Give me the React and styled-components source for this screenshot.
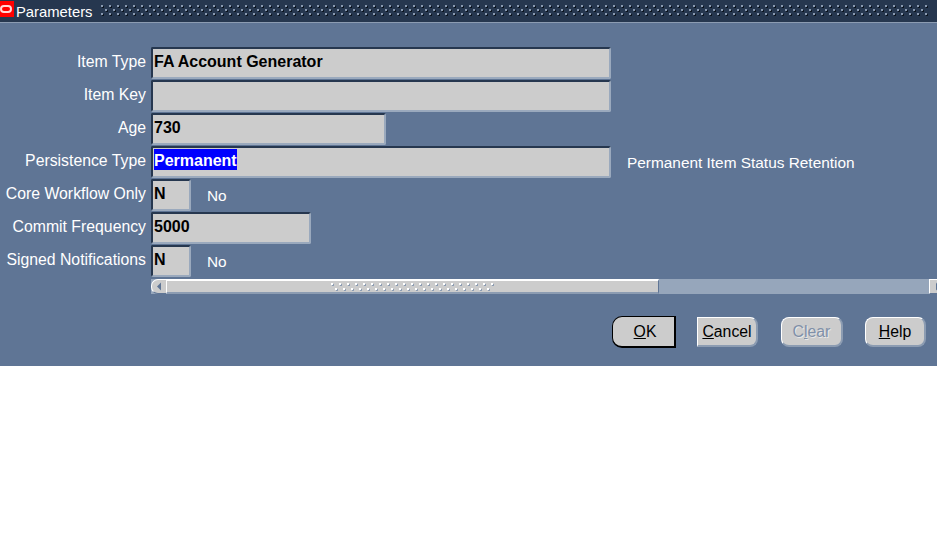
import React from 'react';
import styled, { createGlobalStyle } from 'styled-components';

const GlobalStyle = createGlobalStyle`
  html, body {
    margin: 0;
    padding: 0;
    background: #fff;
  }
`;

const Window = styled.div`
  width: 937px;
  height: 366px;
  background: #5f7595;
  font-family: "Liberation Sans", Arial, sans-serif;
  overflow: hidden;
`;

const TitleBar = styled.div`
  box-sizing: border-box;
  height: 23px;
  background: #26374f;
  border-bottom: 1px solid #8c9cb2;
  display: flex;
  align-items: flex-start;
`;

const LogoBox = styled.div`
  width: 14px;
  height: 16px;
  margin-top: 1px;
  background: #f00;
  flex: none;
`;

const Title = styled.div`
  color: #fff;
  font-size: 14.8px;
  line-height: 16px;
  margin: 4px 0 0 2px;
  flex: none;
`;

const DotStrip = styled.svg`
  display: block;
  flex: none;
  margin: ${p => p.$margin};
`;

const Form = styled.div`
  display: grid;
  grid-template-columns: 146px 1fr;
  grid-auto-rows: 33px;
  column-gap: 5px;
  padding-top: 24px;
`;

const Label = styled.div`
  color: #fff;
  font-size: 15.8px;
  line-height: 30px;
  text-align: right;
  white-space: nowrap;
`;

const FieldRow = styled.div`
  display: flex;
  align-items: flex-start;
`;

const Field = styled.div`
  box-sizing: border-box;
  width: ${p => p.$width}px;
  height: 32px;
  background: #cccccc;
  border: 2px solid;
  border-color: #26374f #9aa9bd #9aa9bd #26374f;
  border-radius: 2px;
  padding-left: 1px;
  color: #000;
  font-size: 16px;
  font-weight: bold;
  line-height: 26px;
  white-space: nowrap;
`;

const Selected = styled.span`
  background: #0000ff;
  color: #fff;
  display: inline-block;
  height: 21px;
  line-height: 24px;
  margin-top: 1px;
  vertical-align: top;
`;

const Hint = styled.div`
  color: #fff;
  font-size: 15.4px;
  line-height: 16px;
  margin: 9px 0 0 16px;
  white-space: nowrap;
`;

const ScrollRow = styled.div`
  grid-column: 2;
  width: 793px;
  height: 15px;
  margin-top: 1px;
  display: flex;
  background: #96a6bb;
`;

const ScrollBtn = styled.div`
  width: 15px;
  height: 15px;
  flex: none;
  box-sizing: border-box;
  background: #cccccc;
  border-top: 1px solid #fff;
  border-bottom: 1px solid #5f7595;
  border-left: 1px solid #fff;
  border-radius: ${p => (p.$left ? '7px 0 0 7px' : '0')};
  display: flex;
  align-items: center;
  justify-content: center;
`;

const Track = styled.div`
  flex: 1;
  display: flex;
`;

const Thumb = styled.div`
  box-sizing: border-box;
  width: 493px;
  height: 15px;
  background: #cccccc;
  border-top: 2px solid #fff;
  border-bottom: 2px solid #8c9cb2;
  border-left: 1px solid #fff;
  border-right: 1px solid #5f7595;
  display: flex;
  justify-content: center;
  align-items: center;
`;

const Buttons = styled.div`
  display: flex;
  justify-content: flex-end;
  padding: 5px 11px 0 0;
  gap: 22px;
`;

const Button = styled.div`
  box-sizing: border-box;
  width: ${p => p.$width}px;
  height: 30px;
  margin-top: 1px;
  margin-right: ${p => p.$after || 0}px;
  background: #cccccc;
  border: 1px solid #fff;
  border-bottom: 2px solid #8c9cb2;
  border-right: 2px solid #8c9cb2;
  border-radius: ${p => (p.$square ? '0 8px 8px 0' : '8px')};
  color: ${p => (p.$disabled ? '#7f90a8' : '#000')};
  font-size: 15.8px;
  line-height: 28px;
  text-align: center;
  text-shadow: ${p => (p.$disabled ? '1px 1px 0 #e8e8e8' : 'none')};
`;

const DefaultButton = styled(Button)`
  height: 32px;
  margin-top: 0;
  border: 1px solid #000;
  border-bottom: 2px solid #000;
  border-right: 2px solid #000;
  border-radius: 10px 0 0 10px;
  line-height: 30px;
  padding-left: 3px;
`;

const Key = styled.span`
  text-decoration: underline;
`;

function Arrow({ left }) {
  return (
    <svg width="7" height="9" viewBox="0 0 7 9">
      <path d={left ? 'M5 0.5 L1 4.5 L5 8.5 Z' : 'M2 0.5 L6 4.5 L2 8.5 Z'} fill="#5f7595" />
    </svg>
  );
}

function OracleLogo() {
  return (
    <svg width="14" height="16" viewBox="0 0 14 16">
      <rect x="1" y="5" width="10" height="6" rx="3" fill="none" stroke="#ffd8d8" strokeWidth="2" />
    </svg>
  );
}

// staggered two-tone dots, used on the title bar and the scrollbar thumb
function Dots({ id, width, height, rowGap, light, dark, margin }) {
  return (
    <DotStrip width={width} height={height} $margin={margin} shapeRendering="crispEdges">
      <defs>
        <pattern id={id} width="8" height={rowGap * 2} patternUnits="userSpaceOnUse">
          <rect x="1" y="1" width="2" height="2" fill={dark} />
          <rect x="0" y="0" width="2" height="2" fill={light} />
          <rect x="5" y={rowGap + 1} width="2" height="2" fill={dark} />
          <rect x="4" y={rowGap} width="2" height="2" fill={light} />
        </pattern>
      </defs>
      <rect width={width} height={height} fill={`url(#${id})`} />
    </DotStrip>
  );
}

const rows = [
  { label: 'Item Type', value: 'FA Account Generator', width: 460 },
  { label: 'Item Key', value: '', width: 460 },
  { label: 'Age', value: '730', width: 235 },
  { label: 'Persistence Type', selected: 'Permanent', width: 460, hint: 'Permanent Item Status Retention' },
  { label: 'Core Workflow Only', value: 'N', width: 40, hint: 'No' },
  { label: 'Commit Frequency', value: '5000', width: 160 },
  { label: 'Signed Notifications', value: 'N', width: 40, hint: 'No' },
];

export default function App() {
  return (
    <Window>
      <GlobalStyle />
      <TitleBar>
        <LogoBox><OracleLogo /></LogoBox>
        <Title>Parameters</Title>
        <Dots id="title-dots" width={827} height={12} rowGap={4} light="#8a9ab0" dark="#0c1520" margin="5px 0 0 9px" />
      </TitleBar>
      <Form>
        {rows.map(row => (
          <React.Fragment key={row.label}>
            <Label>{row.label}</Label>
            <FieldRow>
              <Field $width={row.width}>
                {row.selected ? <Selected>{row.selected}</Selected> : row.value}
              </Field>
              {row.hint && <Hint>{row.hint}</Hint>}
            </FieldRow>
          </React.Fragment>
        ))}
        <ScrollRow>
          <ScrollBtn $left><Arrow left /></ScrollBtn>
          <Track>
            <Thumb>
              <Dots id="grip-dots" width={164} height={8} rowGap={5} light="#ffffff" dark="#8c9cb2" margin="0" />
            </Thumb>
          </Track>
          <ScrollBtn><Arrow /></ScrollBtn>
        </ScrollRow>
      </Form>
      <Buttons>
        <DefaultButton $width={64} $after={-1}><Key>O</Key>K</DefaultButton>
        <Button $width={61} $square $after={1}><Key>C</Key>ancel</Button>
        <Button $width={62} $disabled>C<Key>l</Key>ear</Button>
        <Button $width={61}><Key>H</Key>elp</Button>
      </Buttons>
    </Window>
  );
}
